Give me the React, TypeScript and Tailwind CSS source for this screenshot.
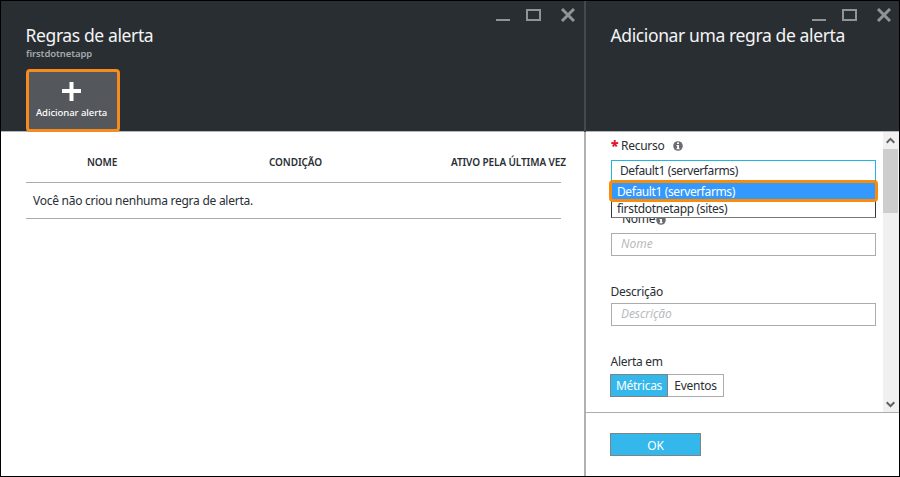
import type { ReactNode } from "react";

function WindowControls() {
  return (
    <svg width="79" height="14" viewBox="0 0 79 14" fill="none" stroke="#919497" strokeWidth="2">
      <path d="M0 12H14" />
      <rect x="31" y="2" width="13" height="10" />
      <path d="M66 1L78 13M78 1L66 13" strokeWidth="3" />
    </svg>
  );
}

function Header({ title, end, children }: { title: string; end: string; children?: ReactNode }) {
  return (
    <header className="h-[131px] shrink-0 border-b border-[#b4b5b9] bg-[#292e32]">
      <div className={`flex justify-end pt-[7px] ${end}`}>
        <WindowControls />
      </div>
      <h1 className="pl-[24.5px] pt-px text-[17.5px] leading-6 tracking-[-0.38px] whitespace-nowrap text-[#f4f4f5]">{title}</h1>
      {children}
    </header>
  );
}

function Info({ className = "" }: { className?: string }) {
  return (
    <svg className={className} width="10" height="10" viewBox="0 0 10 10">
      <circle cx="5" cy="5" r="4.8" fill="#6a6c70" />
      <path d="M4 1.5H6V3H4zM3.5 4H6V7.2H6.6V8.2H3.5V7.2H4.1V5H3.5z" fill="#fff" />
    </svg>
  );
}

export default function App() {
  return (
    <div className="flex h-[477px] w-[900px] overflow-hidden border border-black bg-white font-['Noto_Sans','Open_Sans',sans-serif] text-[12px] tracking-[-0.26px] text-[#292e35]">
      <section className="w-[583px] shrink-0">
        <Header title="Regras de alerta" end="pr-[9px]">
          <p className="mt-px pl-[25px] text-[9.5px] leading-3 font-semibold tracking-[-0.1px] text-[#a5a9ad]">firstdotnetapp</p>
          <button className="mt-[9px] ml-[25px] flex h-[63px] w-[94px] flex-col items-center rounded-[4px] border-[3px] border-[#f68b1f] bg-[#54575c] pt-[10px] pr-[3px] text-white">
            <svg width="19" height="19" viewBox="0 0 19 19" stroke="#fff" strokeWidth="4">
              <path d="M9.5 0V19M0 9H19" />
            </svg>
            <span className="mt-[4px] text-[9.5px] leading-4 font-medium tracking-[-0.06px] whitespace-nowrap">Adicionar alerta</span>
          </button>
        </Header>
        <div className="mr-[23px] ml-[25px]">
          <div className="flex h-[51px] items-center border-b border-[#acacac] pt-[11px] text-[10px] font-semibold tracking-[-0.1px] whitespace-nowrap">
            <span className="w-[182px] shrink-0 pl-[61px]">NOME</span>
            <span className="w-[182px] shrink-0 pl-[61px]">CONDIÇÃO</span>
            <span className="shrink-0 pl-[61px]">ATIVO PELA ÚLTIMA VEZ</span>
          </div>
          <div className="h-[36px] border-b border-[#acacac] pl-[7px] leading-[36px]">Você não criou nenhuma regra de alerta.</div>
        </div>
      </section>
      <section className="flex w-[315px] shrink-0 flex-col border-l-2 border-[#b0b1b4] [border-image:linear-gradient(#45494e_131px,#b0b1b4_131px)_1]">
        <Header title="Adicionar uma regra de alerta" end="pr-[8px]" />
        <div className="flex h-[280px] shrink-0 justify-between">
          <div className="ml-[24px] w-[266px] pt-[6px]">
            <div className="flex h-[16px] items-center">
              <span className="w-[11px] pl-px text-[14px] leading-[16px] font-black text-[#e3142a]">*</span>
              <span>Recurso</span>
              <Info className="ml-[8px]" />
            </div>
            <div className="relative mt-[6px] ml-px h-[23px] w-[265px] border border-[#1fb5e5] pl-[8px] leading-[20px] tracking-[-0.39px]">
              Default1 (serverfarms)
              <div className="absolute top-[19px] -left-px h-[38px] w-[265px] border border-t-0 border-[#34373d] border-b-[#777] bg-white pl-[5px]">
                <div className="relative -ml-[8px] h-[22px] w-[269px] rounded-[4px] border-[3px] border-[#fb8c08] bg-[#3399ff] pl-[5px] leading-[17px] text-white">Default1 (serverfarms)</div>
                <div className="leading-[14px] tracking-[-0.32px]">firstdotnetapp (sites)</div>
              </div>
            </div>
            <div className="mt-[28px] ml-[12px] flex h-[16px] items-center">
              <span>Nome</span>
              <Info className="mt-px ml-[0.5px]" />
            </div>
            <div className="mt-[6px] ml-px h-[23px] border border-[#acacac] pl-[9px] leading-[20px] tracking-normal text-[#b9bbbe] italic">Nome</div>
            <div className="mt-[28px] h-[16px] pl-[0.5px] leading-[16px]">Descrição</div>
            <div className="mt-[3px] ml-px h-[23px] border border-[#acacac] pl-[9px] leading-[20px] tracking-[-0.1px] text-[#b9bbbe] italic">Descrição</div>
            <div className="mt-[28px] h-[16px] pl-[0.5px] leading-[16px]">Alerta em</div>
            <div className="mt-[4px] flex h-[23px] text-center leading-[21px]">
              <div className="w-[58px] border border-[#7e8388] bg-[#34b7eb] text-white">Métricas</div>
              <div className="w-[56px] border border-l-0 border-[#acacac] leading-[22px]">Eventos</div>
            </div>
          </div>
          <div className="flex w-[16px] flex-col items-center bg-[#f0f0f0]">
            <svg className="mt-[5px] mr-px" width="9" height="7" viewBox="0 0 9 7" fill="none" stroke="#606060" strokeWidth="2">
              <path d="M.7 5.7L4.5 1.9L8.3 5.7" />
            </svg>
            <div className="mt-[5px] mr-px h-[64px] w-[15px] bg-[#cdcdcd]" />
            <svg className="mt-auto mr-px mb-[4px]" width="9" height="7" viewBox="0 0 9 7" fill="none" stroke="#606060" strokeWidth="2">
              <path d="M.7 1.3L4.5 5.1L8.3 1.3" />
            </svg>
          </div>
        </div>
        <footer className="border-t border-[#acacac] pt-[20px] pl-[24px]">
          <button className="h-[23px] w-[91px] border border-[#7e8388] bg-[#34b7eb] pt-px leading-[22px] text-white">OK</button>
        </footer>
      </section>
    </div>
  );
}
